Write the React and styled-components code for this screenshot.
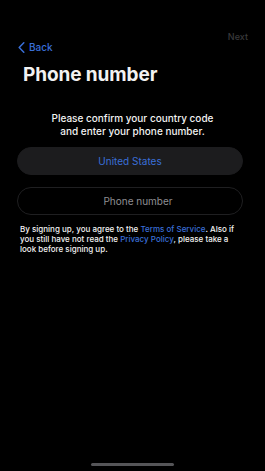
import React from 'react';
import styled, { createGlobalStyle } from 'styled-components';

const colors = {
  bg: '#000000',
  white: '#f2f2f2',
  blue: '#3a6fd8',
  field: '#1c1c1e',
  border: '#1f1f21',
  muted: '#8e8e93',
  dim: '#3a3a3c',
};

const GlobalStyle = createGlobalStyle`
  html, body {
    margin: 0;
    padding: 0;
    background: ${colors.bg};
  }
  body {
    font-family: Inter, "Noto Sans", "Liberation Sans", sans-serif;
    -webkit-font-smoothing: antialiased;
  }
`;

const Screen = styled.div`
  width: 265px;
  height: 471px;
  background: ${colors.bg};
  display: flex;
  flex-direction: column;
  position: relative;
  overflow: hidden;
`;

const NavBar = styled.div`
  display: flex;
  justify-content: space-between;
  align-items: flex-start;
  padding: 30px 17px 0 18px;
  height: 30px;
`;

const BackButton = styled.div`
  display: flex;
  align-items: center;
  gap: 4px;
  margin-top: 11px;
  color: ${colors.blue};
  font-size: 10px;
  font-weight: 500;
`;

const NextButton = styled.div`
  color: ${colors.dim};
  font-size: 9px;
  font-weight: 500;
  margin-top: 1px;
`;

const Title = styled.h1`
  margin: 3px 0 0 23px;
  color: ${colors.white};
  font-size: 19px;
  font-weight: 700;
  letter-spacing: -0.1px;
  line-height: 24px;
`;

const Instructions = styled.p`
  margin: 25px 0 0 0;
  text-align: center;
  color: ${colors.white};
  font-size: 10px;
  font-weight: 500;
  line-height: 12.5px;
`;

const Fields = styled.div`
  display: flex;
  flex-direction: column;
  gap: 12px;
  margin: 10px 22px 0 17px;
`;

const Field = styled.div`
  height: 28px;
  border-radius: 14px;
  display: flex;
  align-items: center;
  justify-content: center;
  padding-left: ${p => (p.$filled ? '0' : '16px')};
  font-size: 10px;
  background: ${p => (p.$filled ? colors.field : 'transparent')};
  border: 1px solid ${p => (p.$filled ? colors.field : colors.border)};
  color: ${p => (p.$filled ? colors.blue : colors.muted)};
  box-sizing: border-box;
`;

const Legal = styled.p`
  margin: 9px 20px 0 20px;
  color: ${colors.white};
  font-size: 8px;
  font-weight: 500;
  line-height: 10px;
`;

const Link = styled.span`
  color: ${colors.blue};
`;

const HomeIndicator = styled.div`
  position: absolute;
  left: 91px;
  bottom: 5px;
  width: 83px;
  height: 3px;
  border-radius: 2px;
  background: #555558;
`;

const Chevron = () => (
  <svg width="7" height="11" viewBox="0 0 7 11">
    <path d="M5.8 0.8 L1.2 5.5 L5.8 10.2" fill="none" stroke={colors.blue} strokeWidth="1.5" strokeLinecap="round" strokeLinejoin="round" />
  </svg>
);

export default function App() {
  return (
    <Screen>
      <GlobalStyle />
      <NavBar>
        <BackButton>
          <Chevron />
          Back
        </BackButton>
        <NextButton>Next</NextButton>
      </NavBar>
      <Title>Phone number</Title>
      <Instructions>
        Please confirm your country code
        <br />
        and enter your phone number.
      </Instructions>
      <Fields>
        <Field $filled>United States</Field>
        <Field>Phone number</Field>
      </Fields>
      <Legal>
        By signing up, you agree to the <Link>Terms of Service</Link>. Also if you still have not read the{' '}
        <Link>Privacy Policy</Link>, please take a look before signing up.
      </Legal>
      <HomeIndicator />
    </Screen>
  );
}
